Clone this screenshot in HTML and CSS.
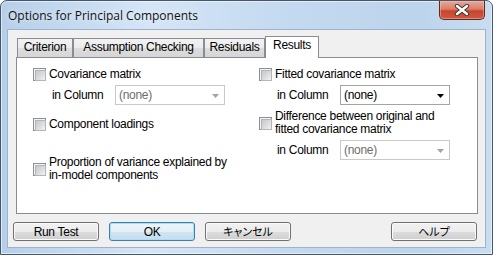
FILE: index.html
```html
<!DOCTYPE html>
<html lang="en">
<head>
    <meta charset="UTF-8">
    <title>Options for Principal Components</title>
    <link rel="stylesheet" href="styles.css">
</head>
<body>
    <div class="window">
        <div class="titlebar">
            <span class="title">Options for Principal Components</span>
            <div class="close">
                <svg width="16" height="12" viewBox="0 0 16 12">
                    <path d="M3 2 L13 10 M13 2 L3 10" stroke="#3a3a3a" stroke-width="4.4" stroke-linecap="round"/>
                    <path d="M3 2 L13 10 M13 2 L3 10" stroke="#ffffff" stroke-width="2.4" stroke-linecap="round"/>
                </svg>
            </div>
        </div>
        <div class="client">
            <div class="tabs">
                <div class="tab tab-criterion">Criterion</div>
                <div class="tab tab-assumption">Assumption Checking</div>
                <div class="tab tab-residuals">Residuals</div>
                <div class="tab tab-results active">Results</div>
            </div>
            <div class="pane">
                <div class="col">
                    <label class="check first"><span class="box"></span>Covariance matrix</label>
                    <div class="in-row">
                        <span class="in-label">in Column</span>
                        <div class="combo disabled">(none)
                            <svg class="arrow" width="7" height="4" viewBox="0 0 7 4"><polygon points="0,0 7,0 3.5,4" fill="#a3a3a3"/></svg>
                        </div>
                    </div>
                    <label class="check loadings"><span class="box"></span>Component loadings</label>
                    <label class="check multi proportion"><span class="box"></span><span>Proportion of variance explained by<br>in-model components</span></label>
                </div>
                <div class="col right">
                    <label class="check first"><span class="box"></span>Fitted covariance matrix</label>
                    <div class="in-row">
                        <span class="in-label">in Column</span>
                        <div class="combo">(none)
                            <svg class="arrow" width="7" height="4" viewBox="0 0 7 4"><polygon points="0,0 7,0 3.5,4" fill="#000000"/></svg>
                        </div>
                    </div>
                    <label class="check multi difference"><span class="box"></span><span>Difference between original and<br>fitted covariance matrix</span></label>
                    <div class="in-row">
                        <span class="in-label">in Column</span>
                        <div class="combo disabled">(none)
                            <svg class="arrow" width="7" height="4" viewBox="0 0 7 4"><polygon points="0,0 7,0 3.5,4" fill="#a3a3a3"/></svg>
                        </div>
                    </div>
                </div>
            </div>
            <div class="buttons">
                <button class="btn">Run Test</button>
                <button class="btn default">OK</button>
                <button class="btn jp">キャンセル</button>
                <button class="btn jp help">ヘルプ</button>
            </div>
        </div>
    </div>
</body>
</html>
```

FILE: styles.css
```css
/* Global Reset */
* {
    margin: 0;
    padding: 0;
    box-sizing: border-box;
}
body {
    width: 493px;
    height: 255px;
    overflow: hidden;
    background: #ffffff;
    font-family: "Liberation Sans", "Noto Sans CJK JP", sans-serif;
    font-size: 12px;
    letter-spacing: -0.3px;
    color: #000;
}

/* Aero frame */
.window {
    width: 493px;
    height: 255px;
    border: 1px solid #44566b;
    border-radius: 7px 7px 0 0;
    background: linear-gradient(to right, #b6cfe9 0%, #d4e5f6 30%, #c3d9ef 60%, #bcd4ec 85%, #c9ddf1 100%);
    box-shadow: inset 0 0 0 1px rgba(255, 255, 255, 0.55);
    padding: 0 7px 7px;
    display: flex;
    flex-direction: column;
}
.titlebar {
    height: 29px;
    display: flex;
    justify-content: space-between;
    align-items: flex-start;
}
.title {
    font-family: "Open Sans", "Liberation Sans", sans-serif;
    font-size: 12px;
    letter-spacing: 0;
    line-height: 29px;
    color: #111;
    text-shadow: 0 0 6px rgba(255, 255, 255, 0.9);
}
.close {
    width: 46px;
    height: 19px;
    border: 1px solid #5b2a22;
    border-top: none;
    border-radius: 0 0 5px 5px;
    background: linear-gradient(#e9a899 0%, #dc7d68 45%, #c7452c 55%, #cf5a3e 100%);
    box-shadow: inset 0 0 0 1px rgba(255, 200, 190, 0.45);
    display: flex;
    justify-content: center;
    align-items: center;
}

.client {
    flex: 1;
    background: #f0f0f0;
    box-shadow: 0 0 0 1px #9eb3cb;
}

/* Tabs */
.tabs {
    height: 27px;
    padding-left: 9px;
    display: flex;
    align-items: flex-end;
}
.tab {
    height: 19px;
    border: 1px solid #898c95;
    border-bottom: none;
    background: linear-gradient(#f2f2f2 0%, #ebebeb 50%, #dddddd 51%, #d6d6d6 100%);
    text-align: center;
    line-height: 17px;
}
.tab-criterion { width: 56px; }
.tab-assumption { width: 131px; }
.tab-residuals { width: 61px; }
.tab-results { width: 54px; }
.tab.active {
    height: 22px;
    margin-bottom: -1px;
    background: #ffffff;
    line-height: 17px;
    position: relative;
    z-index: 1;
}

.pane {
    margin-left: 8px;
    width: 462px;
    height: 157px;
    border: 1px solid #898c95;
    background: #ffffff;
    padding-left: 16px;
    display: grid;
    grid-template-columns: 226px 1fr;
    align-items: start;
}
.col {
    display: flex;
    flex-direction: column;
}

/* Checkboxes */
.check {
    display: flex;
    align-items: center;
    line-height: 13px;
}
.check.first { margin-top: 10px; }
.check.loadings { margin-top: 13px; }
.check.proportion { margin-top: 25px; }
.check.difference { margin-top: 5px; }
.box {
    width: 13px;
    height: 13px;
    flex-shrink: 0;
    margin-right: 3px;
    border: 1px solid #8e8f8f;
    background: #f4f4f4;
    padding: 1px;
}
.box::after {
    content: "";
    display: block;
    width: 9px;
    height: 9px;
    border: 1px solid #b2b5ba;
    background: linear-gradient(135deg, #c6c8cc 0%, #dadbdd 50%, #f3f3f3 100%);
}

/* Column pickers */
.in-row {
    margin-top: 4px;
    padding-left: 19px;
    display: flex;
    align-items: center;
}
.right .in-row {
    padding-left: 18px;
}
.in-label {
    width: 63px;
}
.combo {
    width: 110px;
    height: 20px;
    border: 1px solid #a4a4a4;
    background: #ffffff;
    padding-left: 3px;
    display: flex;
    align-items: center;
    justify-content: space-between;
}
.combo.disabled {
    border-color: #c9c9c9;
    color: #6d6d6d;
}
.arrow {
    margin-right: 5px;
    margin-top: 1px;
}

/* Buttons */
.buttons {
    margin-top: 8px;
    padding: 0 8px 0 5px;
    display: flex;
    gap: 10px;
}
.btn {
    width: 86px;
    height: 19px;
    border: 1px solid #707070;
    border-radius: 3px;
    background: linear-gradient(#f2f2f2 0%, #ebebeb 50%, #dddddd 51%, #cfcfcf 100%);
    box-shadow: inset 0 0 0 1px #fbfbfb;
    font-family: inherit;
    font-size: 12px;
    letter-spacing: -0.3px;
    color: #000;
    line-height: 16px;
}
.btn.default {
    border-color: #3c7fb1;
    box-shadow: inset 0 0 0 1px #a9def7;
    background: linear-gradient(#edf5fb 0%, #e4eff8 50%, #d2e4f1 51%, #c8dcec 100%);
}
.btn.jp {
    font-feature-settings: "palt";
    font-size: 11px;
    letter-spacing: 0;
}
.btn.help {
    margin-left: auto;
}
```
